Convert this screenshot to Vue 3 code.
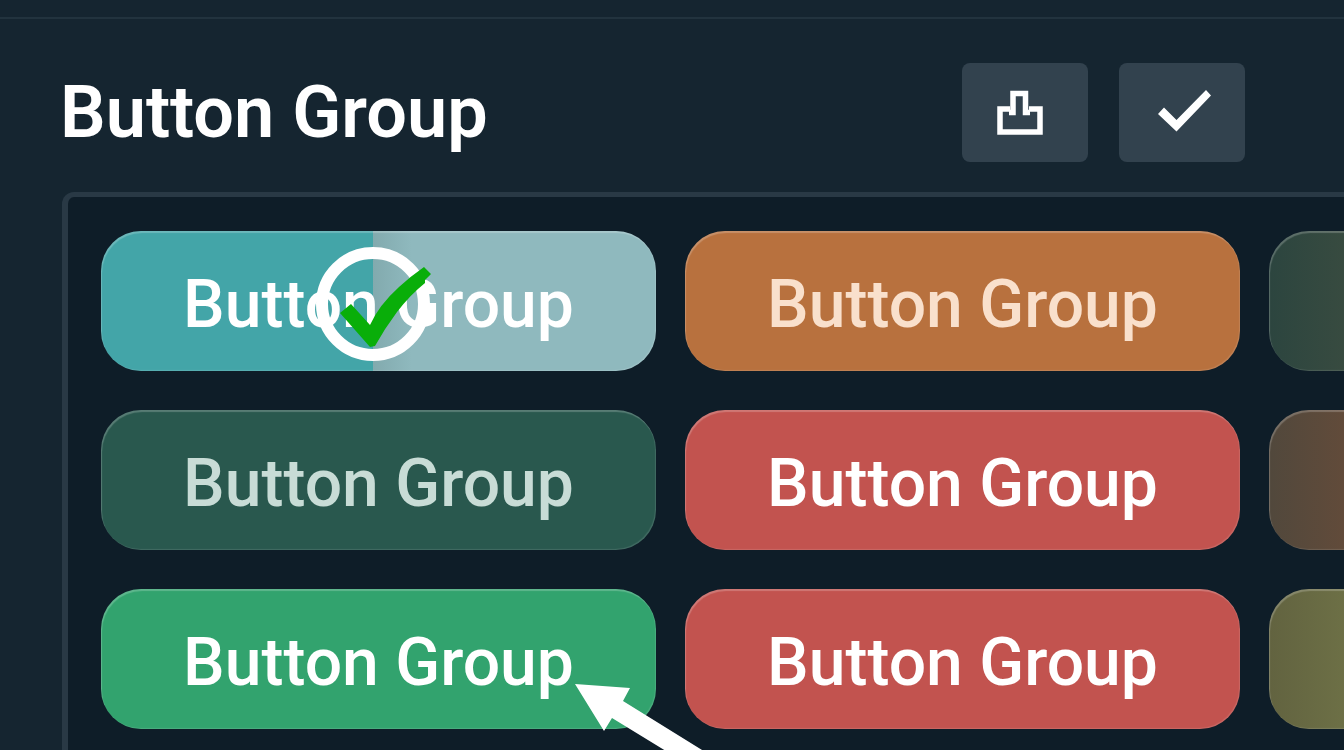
<template>
    <div class="page">
        <div class="top-strip"></div>

        <header class="header">
            <h1 class="title">Button Group</h1>

            <div class="actions">
                <button type="button" class="action" aria-label="Export">
                    <svg viewBox="0 0 60 60" aria-hidden="true">
                        <path
                            d="M15 26H5V49H45V26H34M14 29.5H18V10.5H30.5V29.5H35"
                            fill="none"
                            stroke="#fff"
                            stroke-width="5.5"
                        />
                    </svg>
                </button>
                <button type="button" class="action" aria-label="Confirm">
                    <svg viewBox="0 0 60 60" aria-hidden="true">
                        <path d="M6 31L12 24.5L24.5 37L54 7L59 12.5L24.5 48.5Z" fill="#fff" />
                    </svg>
                </button>
            </div>
        </header>

        <main class="panel">
            <div class="grid">
                <div v-for="item in items" :key="item.id" class="cell">
                    <button
                        type="button"
                        class="group-button"
                        :class="item.tone"
                        :aria-label="item.label ? null : 'Button Group'"
                    >
                        {{ item.label }}
                    </button>

                    <svg
                        v-if="item.mark === 'check'"
                        class="mark-check"
                        viewBox="0 0 120 120"
                        aria-hidden="true"
                    >
                        <circle cx="60" cy="60" r="51" fill="none" stroke="#fff" stroke-width="12" />
                        <path
                            d="M27 69L38 60L57 81Q66 61 86 43Q98 32 111 23L118 30L112 36L112 39Q97 51 84 68Q72 84 62 102L57 103Z"
                            fill="#09ae09"
                        />
                    </svg>

                    <svg
                        v-if="item.mark === 'arrow'"
                        class="mark-arrow"
                        viewBox="0 0 150 90"
                        aria-hidden="true"
                    >
                        <path d="M1 1L56 5L49 18L149 80L136 95L38 35L30 48Z" fill="#fff" />
                    </svg>
                </div>
            </div>
        </main>
    </div>
</template>

<script setup>
const items = [
    { id: 1, label: 'Button Group', tone: 'teal', mark: 'check' },
    { id: 2, label: 'Button Group', tone: 'orange' },
    { id: 3, label: '', tone: 'moss' },
    { id: 4, label: 'Button Group', tone: 'forest' },
    { id: 5, label: 'Button Group', tone: 'red' },
    { id: 6, label: '', tone: 'brown' },
    { id: 7, label: 'Button Group', tone: 'green', mark: 'arrow' },
    { id: 8, label: 'Button Group', tone: 'red' },
    { id: 9, label: '', tone: 'olive' },
]
</script>

<style>
body {
    margin: 0;
    background: #152530;
}
</style>

<style scoped>
.page {
    display: flex;
    flex-direction: column;
    height: 100vh;
    overflow: hidden;
    color: #ffffff;
    background: #152530;
    font-family: Roboto, "Liberation Sans", sans-serif;
}

.top-strip {
    flex: none;
    height: 17px;
    border-bottom: 2px solid #22333e;
}

.header {
    display: flex;
    flex: none;
    align-items: center;
    justify-content: space-between;
    padding: 44px 99px 30px 60px;
}

.title {
    margin: 0;
    font-size: 72px;
    font-weight: 600;
    line-height: 98px;
    white-space: nowrap;
}

.actions {
    display: flex;
    gap: 31px;
}

.action {
    display: flex;
    align-items: center;
    justify-content: center;
    width: 126px;
    height: 99px;
    padding: 0;
    background: #32424e;
    border: 0;
    border-radius: 8px;
    cursor: pointer;
}

.action svg {
    width: 60px;
    height: 60px;
    overflow: visible;
}

.panel {
    flex: 1;
    min-height: 0;
    margin-left: 62px;
    padding: 34px 0 0 33px;
    background: #0e1d28;
    border: solid #293945;
    border-width: 5px 0 0 6px;
    border-top-left-radius: 12px;
}

/* two full columns plus the start of the third */
.grid {
    display: grid;
    grid-template-columns: repeat(3, calc((100% - 133px) / 2));
    gap: 39px 29px;
}

.cell {
    position: relative;
}

.group-button {
    display: block;
    width: 100%;
    height: 140px;
    padding: 6px 0 0;
    color: #ffffff;
    border: 0;
    border-radius: 40px;
    box-shadow: inset 1px 2px 1px rgba(255, 255, 255, 0.22), inset -1px -1px 1px rgba(255, 255, 255, 0.12);
    font-family: inherit;
    font-size: 66px;
    font-weight: 500;
    white-space: nowrap;
    cursor: pointer;
}

.teal {
    background: linear-gradient(90deg, #43a5a8 49%, #82aaae 49%, #8fb9be 56%);
}

.orange {
    color: #f9e0cc;
    background: #b8713e;
}

.moss {
    background: linear-gradient(90deg, #2c453f, #384b40 14%);
}

.forest {
    color: #c8dcd6;
    background: #29584e;
}

.red {
    background: #c2534f;
}

.brown {
    background: linear-gradient(90deg, #51483c, #624b3a 14%);
}

.green {
    background: #32a36e;
}

.olive {
    background: linear-gradient(90deg, #626340, #6d7046 14%);
}

.mark-check {
    position: absolute;
    top: 13px;
    left: 49%;
    width: 120px;
    height: 120px;
    transform: translateX(-50%);
    pointer-events: none;
}

.mark-arrow {
    position: absolute;
    top: 94px;
    right: -68px;
    z-index: 1;
    width: 150px;
    height: 90px;
    pointer-events: none;
}
</style>
